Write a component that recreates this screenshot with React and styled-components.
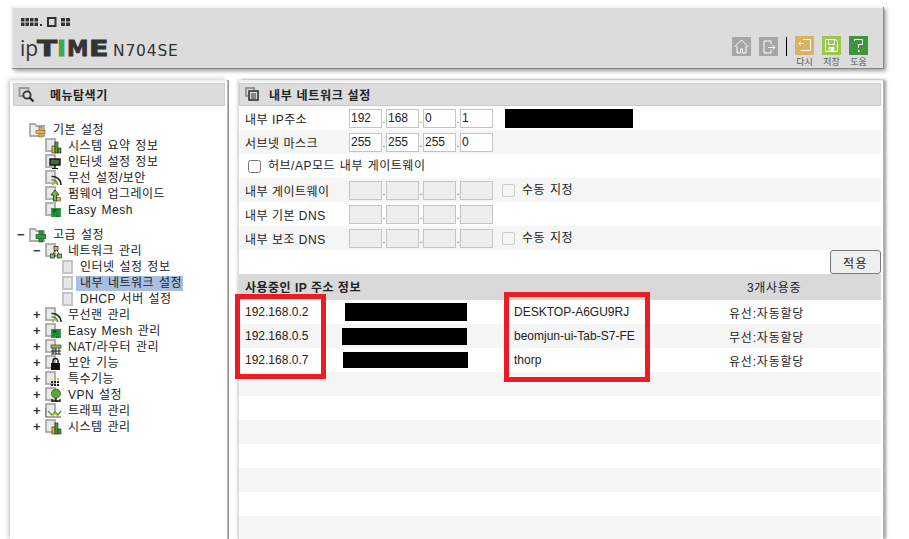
import React from 'react';
import styled, { createGlobalStyle } from 'styled-components';

const Global = createGlobalStyle`
  html, body { margin: 0; padding: 0; background: #fff; overflow: hidden; }
  body { font-family: "Liberation Sans", "Noto Sans CJK KR", sans-serif; font-size: 12px; color: #222; }
`;

const Page = styled.div`
  position: relative;
  width: 909px;
  height: 539px;
  overflow: hidden;
  padding: 6px 26px 0 10px;
  box-sizing: border-box;
  display: flex;
  flex-direction: column;
  gap: 12px;
`;

const Header = styled.header`
  margin-left: 1px;
  height: 62px;
  flex: none;
  box-sizing: border-box;
  background: #dcdcdc;
  border-top: 2px solid #f4f4f4;
  border-left: 2px solid #efefef;
  box-shadow: 1px 1px 0 #8a8a8a, 3px 3px 4px rgba(0, 0, 0, 0.4);
  display: flex;
  justify-content: space-between;
  padding: 9px 15px 0 7px;
`;

const Logo = styled.div`
  display: flex;
  flex-direction: column;
  gap: 10px;
`;

const Dots = styled.svg`
  display: block;
  margin-left: 1px;
`;

const LogoLine = styled.div`
  display: flex;
  align-items: baseline;
  height: 22px;
  line-height: 22px;
  color: #3a3a3a;
`;

const LogoIp = styled.span`
  font: 400 21px "Open Sans", sans-serif;
  width: 17px;
  line-height: 22px;
  color: #333;
`;

const LogoBold = styled.span`
  display: inline-block;
  width: ${p => p.$w}px;
  font: 700 22px "DejaVu Sans", sans-serif;
  line-height: 22px;
  transform: scaleX(${p => p.$sx});
  transform-origin: left center;
  color: ${p => (p.$green ? '#3ea84f' : '#333')};
  -webkit-text-stroke: 0.8px ${p => (p.$green ? '#3ea84f' : '#333')};
`;

const LogoModel = styled.span`
  font: 400 15.5px "DejaVu Sans", sans-serif;
  letter-spacing: 0.8px;
  margin-left: 3px;
  color: #333;
`;

const Toolbar = styled.div`
  display: flex;
  align-items: flex-start;
  gap: 8px;
  padding-top: 19px;
`;

const ToolItem = styled.div`
  width: 19px;
  display: flex;
  flex-direction: column;
  align-items: center;
  gap: 1px;
`;

const ToolSquare = styled.div`
  width: 19px;
  height: 19px;
  background: ${p => p.$bg};
  display: flex;
  align-items: center;
  justify-content: center;
  margin-top: ${p => p.$mt || 0}px;
`;

const ToolLabel = styled.span`
  font-size: 9px;
  line-height: 12px;
  color: #555;
  white-space: nowrap;
`;

const ToolDivider = styled.div`
  width: 1px;
  height: 19px;
  background: #000;
  margin: 1px 0 0 0;
`;

const Columns = styled.div`
  flex: 1;
  display: flex;
  gap: 11px;
  min-height: 0;
`;

const Sidebar = styled.aside`
  width: 217px;
  flex: none;
  box-sizing: border-box;
  background: #fff;
  border-top: 2px solid #eee;
  padding: 1px 2px 0 3px;
  box-shadow: 1px 0 0 #b5b5b5, 2px 0 0 #999, -1px 0 5px rgba(0, 0, 0, 0.28);
`;

const Main = styled.main`
  width: 645px;
  flex: none;
  box-sizing: border-box;
  background: #fff;
  border-top: 2px solid #eee;
  border-left: 1px solid #ddd;
  padding: 1px 2px 0 0;
  box-shadow: 1px 0 0 #b5b5b5, 3px 0 3px rgba(0, 0, 0, 0.4), -1px 0 2px rgba(0, 0, 0, 0.15);
`;

const TitleBar = styled.div`
  height: 23px;
  box-sizing: border-box;
  background: #dcdcdc;
  border: 1px solid #ccc;
  display: flex;
  align-items: center;
  gap: ${p => p.$gap}px;
  padding-left: ${p => p.$pad}px;
  font-weight: 700;
  letter-spacing: ${p => p.$ls}px;
  color: #222;
`;

const Tree = styled.ul`
  list-style: none;
  margin: 16px 0 0;
  padding: 0;
`;

const TreeRow = styled.li`
  height: 16px;
  display: flex;
  align-items: center;
  padding-left: ${p => p.$indent}px;
  margin-top: ${p => p.$gapTop || 0}px;
  white-space: nowrap;
`;

const Toggle = styled.span`
  width: ${p => p.$w}px;
  flex: none;
  font-weight: 700;
  font-size: 13px;
  line-height: 14px;
  color: #333;
`;

const TreeLabel = styled.span`
  margin-left: ${p => p.$ml}px;
  padding: 0 1px 0 ${p => p.$pl || 0}px;
  line-height: 15px;
  background: ${p => (p.$active ? '#a9bfe0' : 'transparent')};
  letter-spacing: 0.5px;
  word-spacing: 1px;
`;

const Rows = styled.div`
  display: flex;
  flex-direction: column;
`;

const FormRow = styled.div`
  height: 24px;
  display: flex;
  align-items: center;
  padding-left: 6px;
  background: ${p => (p.$alt ? '#f5f5f5' : '#fff')};
`;

const FieldLabel = styled.span`
  width: 104px;
  flex: none;
  letter-spacing: 0.5px;
`;

const Octets = styled.div`
  display: flex;
  align-items: center;
`;

const Octet = styled.input`
  width: 33px;
  height: 19px;
  box-sizing: border-box;
  border: 1px solid #c4c4c4;
  padding: 0 1px;
  font: 12px "Liberation Sans", sans-serif;
  color: #222;
  background: #fff;
  &:disabled { background: #eee; }
`;

const Dot = styled.span`
  width: 4px;
  text-align: center;
  font-size: 10px;
  line-height: 19px;
  padding-top: 2px;
  color: #555;
`;

const CheckBox = styled.input.attrs({ type: 'checkbox' })`
  width: 13px;
  height: 13px;
  margin: 0 ${p => p.$after}px 0 ${p => p.$before}px;
  flex: none;
`;

const CheckText = styled.span`
  letter-spacing: 0.5px;
  word-spacing: 1px;
  margin-top: -4px;
`;

const Redacted = styled.div`
  background: #000;
  width: ${p => p.$w}px;
  height: ${p => p.$h}px;
  margin-left: ${p => p.$ml || 0}px;
  flex: none;
`;

const ApplyRow = styled(FormRow)`
  justify-content: flex-end;
`;

const ApplyButton = styled.button`
  width: 51px;
  height: 24px;
  box-sizing: border-box;
  border: 1px solid #777;
  border-radius: 3px;
  background: #efefef;
  font: 12px "Liberation Sans", "Noto Sans CJK KR", sans-serif;
  letter-spacing: 1.5px;
  color: #222;
  padding: 0;
`;

const TableHead = styled.div`
  height: 26px;
  display: grid;
  grid-template-columns: 502px 1fr;
  align-items: center;
  padding: 0 0 2px 6px;
  box-sizing: border-box;
  background: #d9d9d9;
`;

const HeadTitle = styled.span`
  font-weight: 700;
  letter-spacing: 0.5px;
`;

const HeadCount = styled.span`
  letter-spacing: 0.7px;
`;

const TableRow = styled.div`
  height: 24px;
  display: grid;
  grid-template-columns: 98px 171px 215px 1fr;
  align-items: center;
  padding-left: 6px;
  background: ${p => (p.$alt ? '#f5f5f5' : '#fff')};
`;

const Cell = styled.span`
  white-space: nowrap;
  letter-spacing: ${p => p.$ls || 0}px;
`;

const RedBox = styled.div`
  position: absolute;
  left: ${p => p.$x}px;
  top: ${p => p.$y}px;
  width: ${p => p.$w}px;
  height: ${p => p.$h}px;
  box-sizing: border-box;
  border: 5px solid #ed1c24;
  pointer-events: none;
`;

const Glyphs = {
  folderPlus: <><rect x="10" y="5" width="3" height="10" fill="#e8b64a" stroke="#7a5a10" strokeWidth=".6" /><rect x="7" y="8.5" width="9" height="3" fill="#e8b64a" stroke="#7a5a10" strokeWidth=".6" /><rect x="10.3" y="8.8" width="2.4" height="2.4" fill="#e8b64a" /></>,
  folderGreen: <><rect x="10" y="4" width="4" height="11" fill="#2f9a3a" stroke="#0d4d14" strokeWidth=".6" /><rect x="7" y="7.5" width="10" height="4" fill="#2f9a3a" stroke="#0d4d14" strokeWidth=".6" /><rect x="10.3" y="7.8" width="3.4" height="3.4" fill="#2f9a3a" /></>,
  bars: <><rect x="7" y="8" width="3" height="7" fill="#e2b53c" stroke="#222" strokeWidth=".6" /><rect x="10" y="4" width="3" height="11" fill="#4e9b2e" stroke="#222" strokeWidth=".6" /><rect x="13" y="10" width="3" height="5" fill="#4e9b2e" stroke="#222" strokeWidth=".6" /></>,
  monitor: <><rect x="5" y="5" width="10" height="6" fill="#3c6e3c" stroke="#111" strokeWidth="1.4" /><path d="M10 11v3M7 14.5h6" stroke="#111" strokeWidth="1.2" /></>,
  wifi: <><circle cx="8" cy="14" r="1.4" fill="#d9a32d" /><path d="M6.5 10a5 5 0 0 1 6 5" fill="none" stroke="#4c8f2a" strokeWidth="1.5" /><path d="M6.5 6.5a8.5 8.5 0 0 1 9.5 8.5" fill="none" stroke="#222" strokeWidth="1.5" /></>,
  upgrade: <><path d="M10 4l4 5h-2.4v6H8.5V9H6z" fill="#7dbb3c" stroke="#222" strokeWidth=".8" /><rect x="11.5" y="11.5" width="4" height="3.5" fill="#e5b545" stroke="#222" strokeWidth=".5" /></>,
  mesh: <><rect x="6" y="6" width="10" height="9" fill="#2f9a3a" /><path d="M11 8h3M11 11h3M11 14h3M9 8v6" stroke="#062" strokeWidth="1" /><rect x="8" y="7" width="3" height="3" fill="#063" /></>,
  network: <><rect x="9" y="3.5" width="4" height="4" fill="#e2b53c" stroke="#222" strokeWidth=".7" /><rect x="5.5" y="11" width="4" height="4" fill="#8cc04a" stroke="#222" strokeWidth=".7" /><rect x="12.5" y="11" width="4" height="4" fill="#8cc04a" stroke="#222" strokeWidth=".7" /><path d="M10 7.5L8 11M12 7.5l2 3.5M9.5 13h3" stroke="#222" strokeWidth=".8" /></>,
  router: <><rect x="6" y="6" width="10" height="3" fill="#8cc04a" stroke="#222" strokeWidth=".6" /><path d="M6 12h10M6 15h10M8 9v6M11 9v6M14 9v6" stroke="#222" strokeWidth="1" /></>,
  lock: <><rect x="6" y="8" width="9" height="7" fill="#111" /><path d="M8 8V6a2.5 2.5 0 0 1 5 0v2" fill="none" stroke="#111" strokeWidth="1.4" /></>,
  dots: <><path d="M9 7h2v2H9zM12 7h2v2h-2z" fill="#e2b53c" /><path d="M6 10h2v2H6zM9 10h2v2H9zM12 10h2v2h-2zM6 13h2v2H6zM9 13h2v2H9zM12 13h2v2h-2z" fill="#222" /></>,
  vpn: <><circle cx="11" cy="6.5" r="4.5" fill="#5aa63c" stroke="#1d5a1d" strokeWidth=".7" /><path d="M7 14h8M7 12v3M11 11v4M15 12v3" stroke="#111" strokeWidth="1.3" /></>,
  traffic: <><path d="M1 5v9h15" fill="#f5f5f5" stroke="#555" strokeWidth="1" /><path d="M3 8l4 4 3-3 3 3 3-4" fill="none" stroke="#4a9c32" strokeWidth="1.4" /><path d="M6 13l4-2 3 2" fill="none" stroke="#e2b53c" strokeWidth="1.2" /></>,
};

const TreeSvg = styled.svg`
  display: block;
  flex: none;
`;

const FolderIcon = ({ glyph }) => (
  <TreeSvg width="17" height="16" viewBox="0 0 17 16">
    <path d="M1 2h5l1.5 2H15v10H1z" fill="#eee" stroke="#aaa" strokeWidth="1.8" />
    {Glyphs[glyph]}
  </TreeSvg>
);

const PageIcon = ({ glyph }) => (
  <TreeSvg width="17" height="16" viewBox="0 0 17 16">
    <rect x="1" y="1" width="9" height="12" fill="#e8e8e8" stroke="#aaa" strokeWidth="1.8" />
    {Glyphs[glyph]}
  </TreeSvg>
);

const LeafIcon = () => (
  <TreeSvg width="11" height="14" viewBox="0 0 11 14">
    <rect x="1" y="1" width="9" height="12" fill="#e6e6e6" stroke="#c4c4c4" strokeWidth="2" />
  </TreeSvg>
);

const tree = [
  { type: 'folder', indent: 16, toggle: '', w: 0, glyph: 'folderPlus', label: '기본 설정' },
  { type: 'page', indent: 32, glyph: 'bars', label: '시스템 요약 정보' },
  { type: 'page', indent: 32, glyph: 'monitor', label: '인터넷 설정 정보' },
  { type: 'page', indent: 32, glyph: 'wifi', label: '무선 설정/보안' },
  { type: 'page', indent: 32, glyph: 'upgrade', label: '펌웨어 업그레이드' },
  { type: 'page', indent: 32, glyph: 'mesh', label: 'Easy Mesh' },
  { type: 'folder', indent: 4, toggle: '−', w: 12, glyph: 'folderGreen', label: '고급 설정', gapTop: 9 },
  { type: 'page', indent: 20, toggle: '−', w: 12, glyph: 'network', label: '네트워크 관리' },
  { type: 'leaf', indent: 49, label: '인터넷 설정 정보' },
  { type: 'leaf', indent: 49, label: '내부 네트워크 설정', active: true },
  { type: 'leaf', indent: 49, label: 'DHCP 서버 설정' },
  { type: 'page', indent: 20, toggle: '+', w: 12, glyph: 'wifi', label: '무선랜 관리' },
  { type: 'page', indent: 20, toggle: '+', w: 12, glyph: 'mesh', label: 'Easy Mesh 관리' },
  { type: 'page', indent: 20, toggle: '+', w: 12, glyph: 'router', label: 'NAT/라우터 관리' },
  { type: 'page', indent: 20, toggle: '+', w: 12, glyph: 'lock', label: '보안 기능' },
  { type: 'page', indent: 20, toggle: '+', w: 12, glyph: 'dots', label: '특수기능' },
  { type: 'page', indent: 20, toggle: '+', w: 12, glyph: 'vpn', label: 'VPN 설정' },
  { type: 'page', indent: 20, toggle: '+', w: 12, glyph: 'traffic', label: '트래픽 관리' },
  { type: 'page', indent: 20, toggle: '+', w: 12, glyph: 'bars', label: '시스템 관리' },
];

const ToolIcon = ({ children }) => (
  <svg width="19" height="19" viewBox="0 0 19 19" fill="none" stroke="#fff" strokeWidth="1">{children}</svg>
);

const IpInputs = ({ values, disabled }) => (
  <Octets>
    {values.map((v, i) => (
      <React.Fragment key={i}>
        {i > 0 && <Dot>.</Dot>}
        <Octet defaultValue={v} disabled={disabled} />
      </React.Fragment>
    ))}
  </Octets>
);

const empty = ['', '', '', ''];

export default function App() {
  return (
    <Page>
      <Global />
      <Header>
        <Logo>
          <Dots width="50" height="10" viewBox="0 0 50 10">
            <path fill="#333" d="M0 1h3.5v3.5H0zM4.5 1H8v3.5H4.5zM9 1h3.5v3.5H9zM13.5 1H17v3.5h-3.5zM0 5.5h3.5V9H0zM4.5 5.5H8V9H4.5zM9 5.5h3.5V9H9zM13.5 5.5H17V9h-3.5zM19 7h2v2h-2zM40 1h4v3.5h-4zM45 1h4v3.5h-4zM40 5.5h4V9h-4zM45 5.5h4V9h-4z" />
            <rect x="27" y="1" width="7.5" height="8" fill="none" stroke="#333" strokeWidth="2" />
          </Dots>
          <LogoLine>
            <LogoIp>ip</LogoIp>
            <LogoBold $w={20} $sx={1.35}>T</LogoBold>
            <LogoBold $w={10} $green $sx={1.1}>I</LogoBold>
            <LogoBold $w={22} $sx={0.98}>M</LogoBold>
            <LogoBold $w={21} $sx={1.3}>E</LogoBold>
            <LogoModel>N704SE</LogoModel>
          </LogoLine>
        </Logo>
        <Toolbar>
          <ToolItem>
            <ToolSquare $bg="#a6a6a6" $mt={1}>
              <ToolIcon><path d="M2.5 10L9.5 3l7 7M5 9v7h3.5v-4h2v4H14V9" /></ToolIcon>
            </ToolSquare>
          </ToolItem>
          <ToolItem>
            <ToolSquare $bg="#a6a6a6" $mt={1}>
              <ToolIcon><path d="M12 7V4H5v12h7v-3M9.5 10.5H16M13.5 8l2.5 2.5-2.5 2.5" /></ToolIcon>
            </ToolSquare>
          </ToolItem>
          <ToolDivider />
          <ToolItem>
            <ToolSquare $bg="#dcb25e">
              <ToolIcon><path d="M8 3.5h7.5v11H5.5M8.5 7.5H4M6 5.5L3.5 7.5 6 9.5" /></ToolIcon>
            </ToolSquare>
            <ToolLabel>다시</ToolLabel>
          </ToolItem>
          <ToolItem>
            <ToolSquare $bg="#9ac84f">
              <ToolIcon><path d="M3.5 3.5h10l2 2v10h-12zM6.5 3.5v5h6v-5M7 15.5v-4h5v4" /><rect x="9" y="12.5" width="2" height="2" fill="#fff" /></ToolIcon>
            </ToolSquare>
            <ToolLabel>저장</ToolLabel>
          </ToolItem>
          <ToolItem>
            <ToolSquare $bg="#3f9440">
              <ToolIcon><path d="M5.5 5V3.5h8v5h-4v3.5" /><rect x="9" y="14" width="1.5" height="2" fill="#fff" stroke="none" /></ToolIcon>
            </ToolSquare>
            <ToolLabel>도움</ToolLabel>
          </ToolItem>
        </Toolbar>
      </Header>

      <Columns>
        <Sidebar>
          <TitleBar $gap={14} $pad={4} $ls={0.5}>
            <svg width="18" height="18" viewBox="0 0 18 18" fill="none">
              <rect x="1.5" y="2" width="9" height="8" stroke="#999" strokeWidth="2" />
              <circle cx="9" cy="9" r="3.6" fill="#dcdcdc" stroke="#333" strokeWidth="1.8" />
              <path d="M11.5 11.5L15.5 15.5" stroke="#222" strokeWidth="2.2" />
            </svg>
            <span>메뉴탐색기</span>
          </TitleBar>
          <Tree>
            {tree.map(n => (
              <TreeRow key={n.label + n.indent} $indent={n.indent} $gapTop={n.gapTop}>
                {n.toggle ? <Toggle $w={n.w}>{n.toggle}</Toggle> : null}
                {n.type === 'folder' && <FolderIcon glyph={n.glyph} />}
                {n.type === 'page' && <PageIcon glyph={n.glyph} />}
                {n.type === 'leaf' && <LeafIcon />}
                <TreeLabel
                  $ml={n.type === 'leaf' ? 3 : n.type === 'folder' ? 7 : 6}
                  $pl={n.type === 'leaf' ? 4 : 0}
                  $active={n.active}
                >
                  {n.label}
                </TreeLabel>
              </TreeRow>
            ))}
          </Tree>
        </Sidebar>

        <Main>
          <TitleBar $gap={9} $pad={5} $ls={0.7}>
            <svg width="15" height="15" viewBox="0 0 15 15" fill="none">
              <rect x="1" y="1" width="8" height="8" stroke="#888" strokeWidth="1.6" />
              <rect x="4" y="4" width="9" height="9" fill="#dcdcdc" stroke="#333" strokeWidth="1.6" />
              <path d="M6 7h5M6 9h5M6 11h5" stroke="#333" strokeWidth="1" />
            </svg>
            <span>내부 네트워크 설정</span>
          </TitleBar>
          <Rows>
            <FormRow>
              <FieldLabel>내부 IP주소</FieldLabel>
              <IpInputs values={['192', '168', '0', '1']} />
              <Redacted $w={128} $h={19} $ml={12} />
            </FormRow>
            <FormRow $alt>
              <FieldLabel>서브넷 마스크</FieldLabel>
              <IpInputs values={['255', '255', '255', '0']} />
            </FormRow>
            <FormRow>
              <CheckBox $before={3} $after={7} />
              <CheckText>허브/AP모드 내부 게이트웨이</CheckText>
            </FormRow>
            <FormRow $alt>
              <FieldLabel>내부 게이트웨이</FieldLabel>
              <IpInputs values={empty} disabled />
              <CheckBox disabled $before={9} $after={7} />
              <CheckText>수동 지정</CheckText>
            </FormRow>
            <FormRow>
              <FieldLabel>내부 기본 DNS</FieldLabel>
              <IpInputs values={empty} disabled />
            </FormRow>
            <FormRow $alt>
              <FieldLabel>내부 보조 DNS</FieldLabel>
              <IpInputs values={empty} disabled />
              <CheckBox disabled $before={9} $after={7} />
              <CheckText>수동 지정</CheckText>
            </FormRow>
            <ApplyRow>
              <ApplyButton>적용</ApplyButton>
            </ApplyRow>
            <TableHead>
              <HeadTitle>사용중인 IP 주소 정보</HeadTitle>
              <HeadCount>3개사용중</HeadCount>
            </TableHead>
            <TableRow>
              <Cell>192.168.0.2</Cell>
              <Redacted $w={122} $h={18} $ml={2} />
              <Cell>DESKTOP-A6GU9RJ</Cell>
              <Cell $ls={0.8}>유선:자동할당</Cell>
            </TableRow>
            <TableRow $alt>
              <Cell>192.168.0.5</Cell>
              <Redacted $w={125} $h={17} $ml={-1} />
              <Cell>beomjun-ui-Tab-S7-FE</Cell>
              <Cell $ls={0.8}>무선:자동할당</Cell>
            </TableRow>
            <TableRow>
              <Cell>192.168.0.7</Cell>
              <Redacted $w={125} $h={16} $ml={0} />
              <Cell>thorp</Cell>
              <Cell $ls={0.8}>유선:자동할당</Cell>
            </TableRow>
            {[true, false, true, false, true, false, true].map((alt, i) => (
              <TableRow key={i} $alt={alt} />
            ))}
          </Rows>
        </Main>
      </Columns>
      <RedBox $x={235} $y={294} $w={91} $h={85} />
      <RedBox $x={504} $y={292} $w={146} $h={90} />
    </Page>
  );
}
